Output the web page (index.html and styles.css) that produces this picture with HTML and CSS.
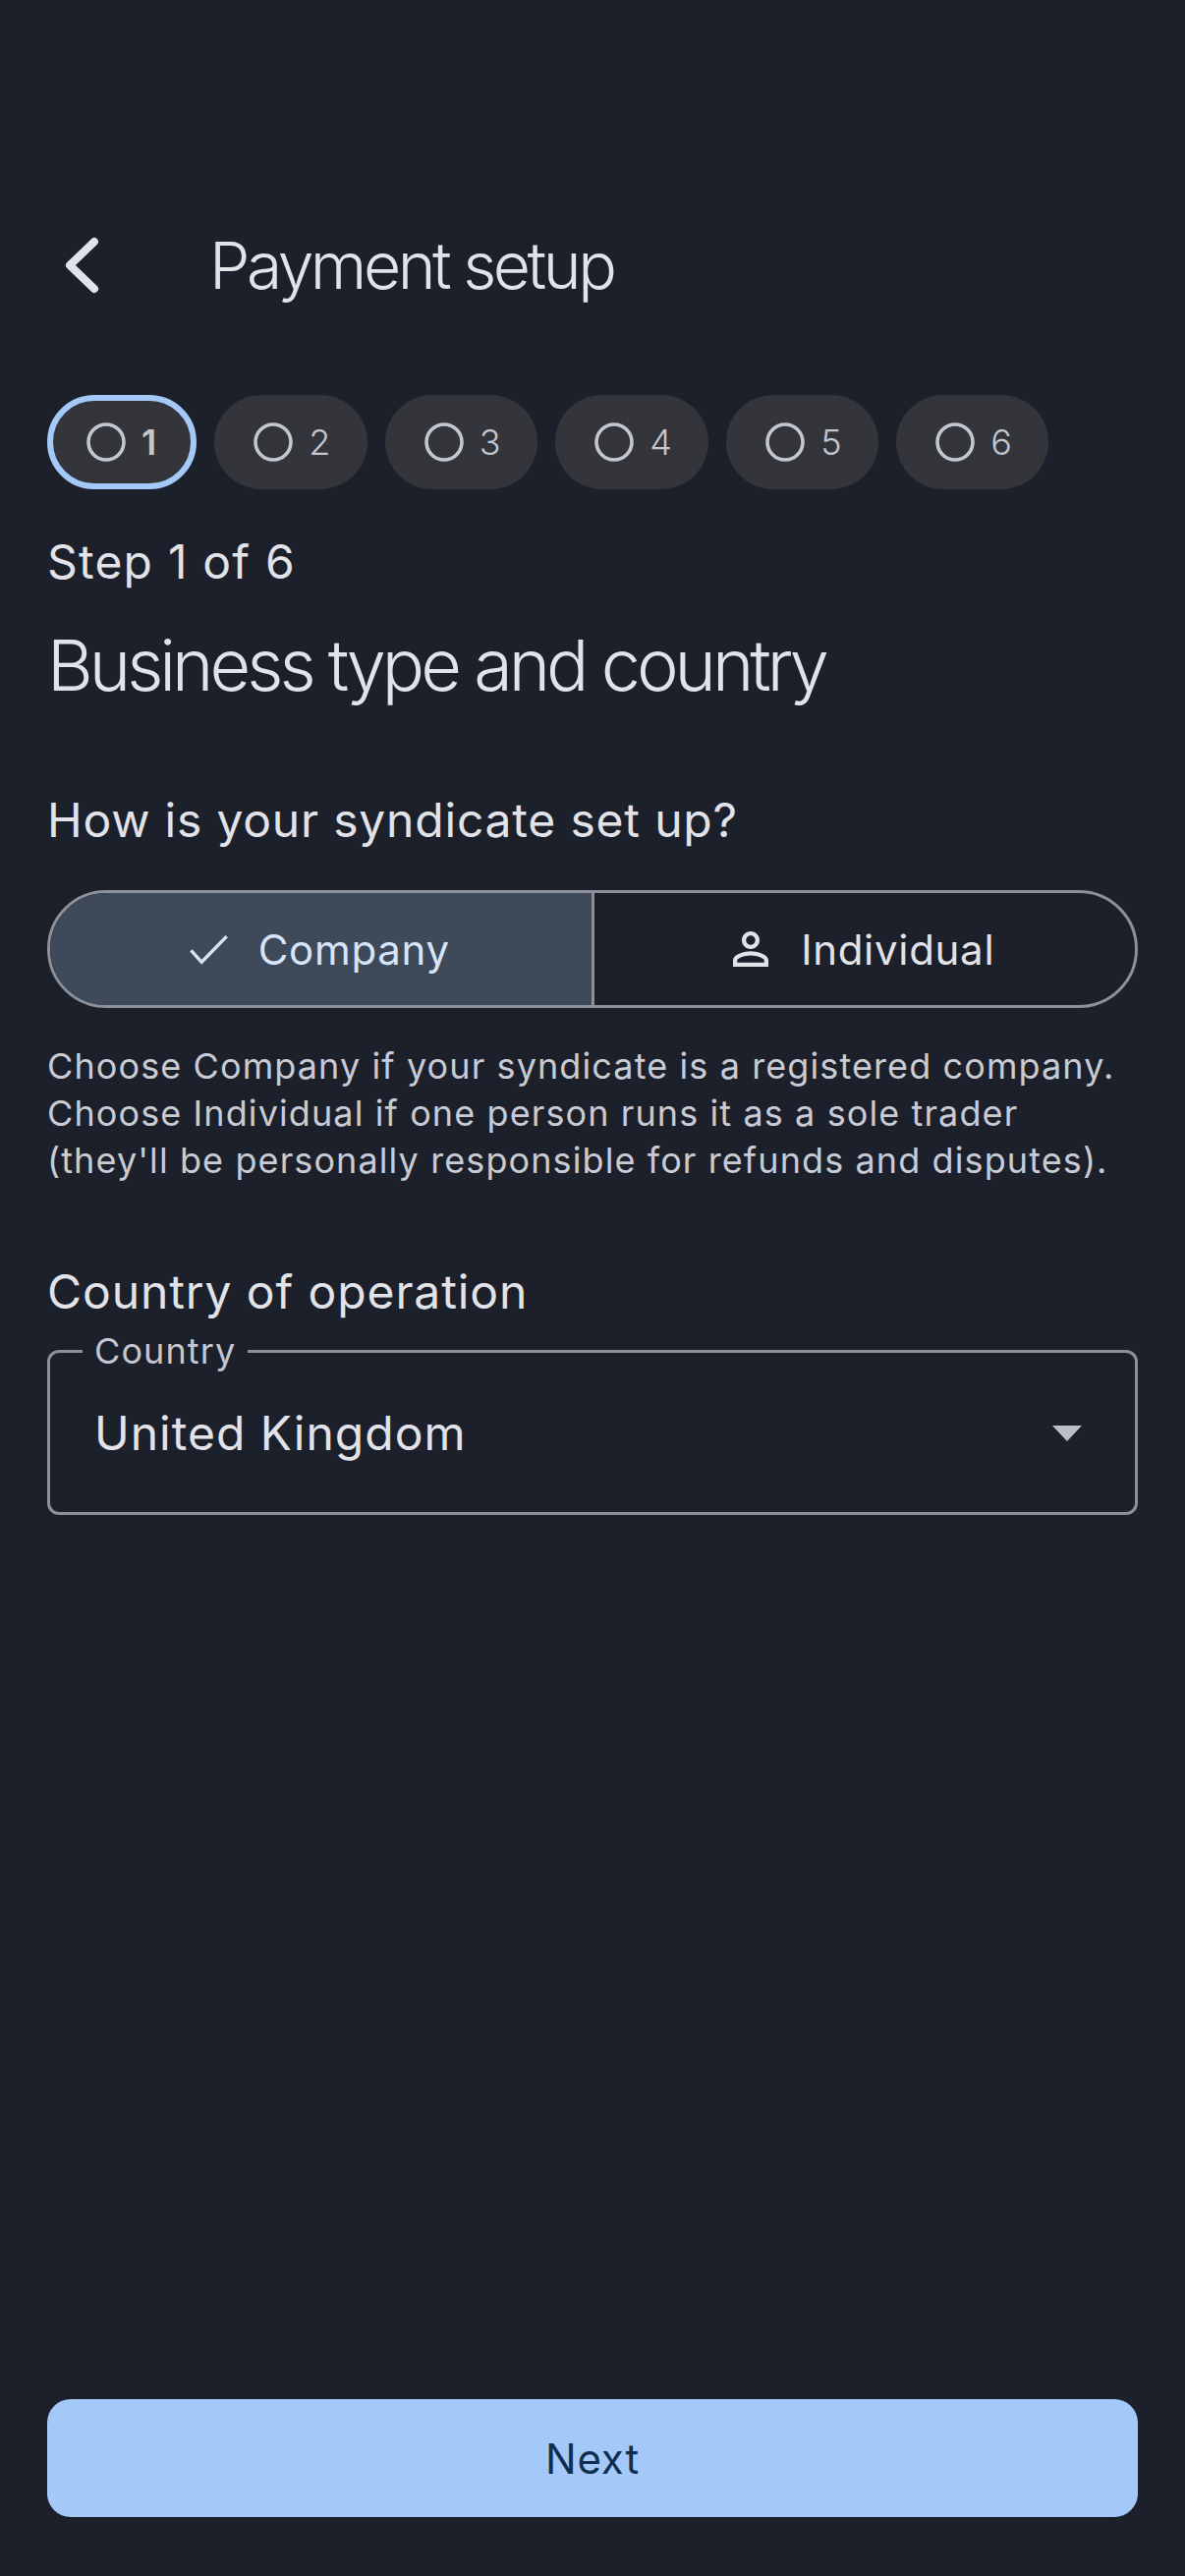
FILE: index.html
```html
<!DOCTYPE html>
<html lang="en">
<head>
    <meta charset="UTF-8">
    <meta name="viewport" content="width=device-width, initial-scale=1.0">
    <title>Payment setup</title>
    <link rel="stylesheet" href="styles.css">
</head>
<body>
    <header class="app-bar">
        <svg class="back-icon" viewBox="0 0 72 72"><polyline points="48,12 23,36 48,60"/></svg>
        <h1 class="app-title">Payment setup</h1>
    </header>

    <div class="step-chips">
        <div class="chip active"><svg class="chip-icon" viewBox="0 0 24 24"><circle cx="12" cy="12" r="9"/></svg>1</div>
        <div class="chip"><svg class="chip-icon" viewBox="0 0 24 24"><circle cx="12" cy="12" r="9"/></svg>2</div>
        <div class="chip"><svg class="chip-icon" viewBox="0 0 24 24"><circle cx="12" cy="12" r="9"/></svg>3</div>
        <div class="chip"><svg class="chip-icon" viewBox="0 0 24 24"><circle cx="12" cy="12" r="9"/></svg>4</div>
        <div class="chip"><svg class="chip-icon" viewBox="0 0 24 24"><circle cx="12" cy="12" r="9"/></svg>5</div>
        <div class="chip"><svg class="chip-icon" viewBox="0 0 24 24"><circle cx="12" cy="12" r="9"/></svg>6</div>
    </div>

    <p class="step-count">Step 1 of 6</p>
    <h2 class="step-title">Business type and country</h2>

    <h3 class="section-label setup-label">How is your syndicate set up?</h3>
    <div class="segmented">
        <button class="segment selected">
            <svg class="check-icon" viewBox="0 0 24 24"><path d="M4.2 12.6L9 17.9 20.3 6.3"/></svg>
            Company
        </button>
        <button class="segment">
            <svg class="segment-icon" viewBox="0 0 24 24"><path d="M12 5.9c1.16 0 2.1.94 2.1 2.1s-.94 2.1-2.1 2.1S9.9 9.16 9.9 8s.94-2.1 2.1-2.1m0 9c2.97 0 6.1 1.46 6.1 2.1v1.1H5.9V17c0-.64 3.13-2.1 6.1-2.1M12 4C9.79 4 8 5.79 8 8s1.79 4 4 4 4-1.79 4-4-1.79-4-4-4zm0 9c-2.67 0-8 1.34-8 4v3h16v-3c0-2.66-5.33-4-8-4z"/></svg>
            Individual
        </button>
    </div>
    <p class="help-text">Choose Company if your syndicate is a registered company.<br>Choose Individual if one person runs it as a sole trader<br>(they'll be personally responsible for refunds and disputes).</p>

    <h3 class="section-label country-label">Country of operation</h3>
    <fieldset class="select-field">
        <legend class="select-legend">Country</legend>
        <div class="select-row">
            <span class="select-value">United Kingdom</span>
            <svg class="select-arrow" viewBox="0 0 30 16"><path d="M0 0h30L15 16z"/></svg>
        </div>
    </fieldset>

    <button class="next-button">Next</button>
</body>
</html>
```

FILE: styles.css
```css
:root {
    --bg: #1c202b;
    --text: #e2e2e9;
    --muted: #c4c6d0;
    --outline: #8e9099;
    --primary: #a4c9f8;
}

* {
    box-sizing: border-box;
}

body {
    margin: 0;
    height: 2622px;
    padding: 174px 48px 60px;
    display: flex;
    flex-direction: column;
    font-family: Inter, "Noto Sans", sans-serif;
    background: var(--bg);
    color: var(--text);
}

h1, h2, h3, p {
    margin: 0;
    font-weight: 400;
}

.app-bar {
    display: flex;
    align-items: center;
    height: 192px;
}

.back-icon {
    width: 72px;
    height: 72px;
    margin-right: 93px;
    fill: none;
    stroke: var(--text);
    stroke-width: 8;
    stroke-linecap: round;
    stroke-linejoin: round;
}

.app-title {
    font-size: 66px;
    font-weight: 350;
    line-height: 84px;
    letter-spacing: -3.5px;
}

.step-chips {
    display: flex;
    gap: 18px;
    margin-top: 36px;
}

.chip {
    display: flex;
    align-items: center;
    gap: 12px;
    height: 96px;
    padding: 0 37.5px 0 36px;
    border-radius: 48px;
    background: #33353b;
    color: var(--muted);
    font-size: 36px;
    font-weight: 300;
}

.chip.active {
    padding: 0 35px 0 30px;
    border: 6px solid var(--primary);
    font-weight: 600;
}

.chip-icon {
    width: 48px;
    height: 48px;
    fill: none;
    stroke: var(--muted);
    stroke-width: 1.8;
}

.step-count {
    margin-top: 44px;
    font-size: 48px;
    line-height: 60px;
    letter-spacing: 1.2px;
}

.step-title {
    margin-top: 27px;
    font-size: 72px;
    font-weight: 350;
    line-height: 96px;
    letter-spacing: -4px;
}

.section-label {
    font-size: 48px;
    line-height: 60px;
    letter-spacing: 0.8px;
}

.setup-label {
    margin-top: 80px;
}

.segmented {
    display: flex;
    height: 120px;
    margin-top: 41px;
    border: 3px solid var(--outline);
    border-radius: 60px;
    overflow: hidden;
}

.segment {
    flex: 1;
    display: flex;
    align-items: center;
    justify-content: center;
    gap: 24px;
    padding: 0 10px 0 0;
    border: none;
    background: none;
    color: var(--text);
    font-family: inherit;
    font-size: 42px;
    letter-spacing: 0.7px;
}

.segment + .segment {
    border-left: 3px solid var(--outline);
}

.segment.selected {
    background: #3e4a59;
    color: #d7e3f8;
}

.segment-icon {
    width: 54px;
    height: 54px;
    fill: currentColor;
}

.check-icon {
    width: 54px;
    height: 54px;
    fill: none;
    stroke: currentColor;
    stroke-width: 1.5;
}

.help-text {
    margin-top: 35px;
    font-size: 36px;
    line-height: 48px;
    letter-spacing: 1.1px;
    color: #c9cbd4;
}

.country-label {
    margin-top: 80px;
    letter-spacing: 0.9px;
}

.select-field {
    height: 185px;
    min-width: 0;
    margin: 12px 0 0;
    padding: 36px 54px 0 45px;
    border: 3px solid var(--outline);
    border-radius: 12px;
}

.select-legend {
    margin-left: -12px;
    padding: 0 12px;
    font-size: 36px;
    line-height: 36px;
    letter-spacing: 1.1px;
    color: var(--muted);
}

.select-row {
    display: flex;
    align-items: center;
    justify-content: space-between;
}

.select-value {
    font-size: 48px;
    letter-spacing: 1px;
}

.select-arrow {
    width: 30px;
    height: 16px;
    fill: #bcbec6;
}

.next-button {
    height: 120px;
    margin-top: auto;
    border: none;
    border-radius: 24px;
    background: var(--primary);
    color: #0e2f50;
    font-family: inherit;
    font-size: 42px;
    letter-spacing: 0.8px;
}
```
